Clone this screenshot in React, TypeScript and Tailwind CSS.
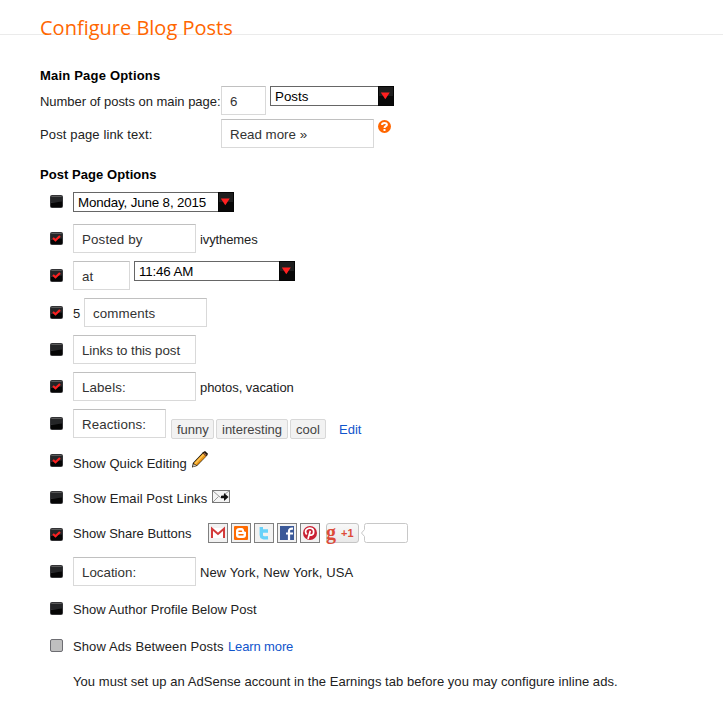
import React from "react";

type BoxProps = { children?: React.ReactNode; className?: string };

function Text({ children, className = "" }: BoxProps) {
  return <span className={`block h-5 shrink-0 whitespace-nowrap leading-5 ${className}`}>{children}</span>;
}

function Field({ children, className = "" }: BoxProps) {
  return (
    <div
      className={`h-[29px] shrink-0 whitespace-nowrap border border-[#d9d9d9] border-t-[#c0c0c0] bg-white pl-2 pt-[5px] text-[13.33px] leading-5 text-[#333] ${className}`}
    >
      {children}
    </div>
  );
}

function Select({ children, className = "" }: BoxProps) {
  return (
    <div className={`flex h-5 shrink-0 border border-r-0 border-[#666] bg-white text-black ${className}`}>
      <span className="grow whitespace-nowrap pl-1 text-[13.33px] leading-[19px]">{children}</span>
      <svg className="-my-px h-5 w-4 shrink-0" viewBox="0 0 16 20">
        <rect width="16" height="20" fill="#050505" />
        <rect x="1" y="1" width="14" height="9" fill="#1e1e1e" />
        <rect x="1" y="10" width="14" height="9" fill="#090909" />
        <path d="M2.800 6.500H11.800L7.300 13.300Z" fill="#ff2020" />
      </svg>
    </div>
  );
}

function Check({ on = false, off = false }: { on?: boolean; off?: boolean }) {
  return (
    <svg className="mt-3 h-[13px] w-[13px] shrink-0" viewBox="0 0 13 13">
      {off ? (
        <rect x=".5" y=".5" width="12" height="12" rx="1.500" fill="#bfbfbf" stroke="#6d6d72" />
      ) : (
        <>
          <rect width="13" height="13" rx="2" fill="#333336" />
          <rect x="1.500" y="1" width="10" height="1" fill="#5a5a5a" />
          <rect x="1" y="2" width="11" height="5" fill="#242527" />
          <path d="M1 8L12 6.500V12H1Z" fill="#050505" />
          {on && <path d="M3 6L5.500 8.300L10 4" fill="none" stroke="#fb2020" strokeWidth="2.200" />}
        </>
      )}
    </svg>
  );
}

function Row({ children, on, off }: { children?: React.ReactNode; on?: boolean; off?: boolean }) {
  return (
    <div className="flex h-[37px] items-start pl-[10px]">
      <Check on={on} off={off} />
      <div className="ml-[10px] flex items-start">{children}</div>
    </div>
  );
}

function Chip({ children, className = "" }: BoxProps) {
  return (
    <span
      className={`h-5 shrink-0 whitespace-nowrap rounded-[2px] border border-[#d8d8d8] bg-[#f2f2f2] pl-[5px] leading-[19px] text-[#444] ${className}`}
    >
      {children}
    </span>
  );
}

function HelpIcon() {
  return (
    <svg className="ml-1 mt-px h-[13px] w-[13px] shrink-0" viewBox="0 0 13 13">
      <circle cx="6.500" cy="6.500" r="6.500" fill="#f60" />
      <path d="M4.100 5V4.700C4.100 2.300 8.900 2.300 8.900 4.700C8.900 6.200 6.500 6.100 6.500 8" fill="none" stroke="#fff" strokeWidth="2" />
      <rect x="5.500" y="9" width="2" height="2" fill="#fff" />
    </svg>
  );
}

function Pencil() {
  return (
    <svg className="ml-1 mt-[9px] h-[17px] w-4 shrink-0" viewBox="0 0 16 17">
      <path d="M0 16.500L.8 12L11 1.200L13 0L16 2.800L15.200 4.500L5 15Z" fill="#1a1408" />
      <path d="M1.700 12.300L10.900 2.400L14 5.200L4.700 14.500Z" fill="#e8961a" />
      <path d="M2.300 12.100L11 2.900L12.300 4.100L3.700 13.300Z" fill="#ffc450" />
      <path d="M.9 15.700L1.600 12.900L4.300 14.800Z" fill="#d9cfc4" />
      <path d="M11.300 2.400L12.400 1.500L14.800 3.900L13.900 5Z" fill="#a0664a" />
    </svg>
  );
}

function Email() {
  return (
    <svg className="ml-1 mt-[11px] h-[13px] w-[18px] shrink-0" viewBox="0 0 18 13">
      <rect x=".5" y=".5" width="17" height="12" fill="#f4f4f4" stroke="#777" />
      <path d="M1 1L8.500 7.500L17 1M1 12L6.500 6.500" fill="none" stroke="#999" />
      <path d="M9 5.800H12V3L16.500 7L12 11V8.200H9Z" fill="#111" />
    </svg>
  );
}

function Share({ children }: BoxProps) {
  return (
    <svg className="h-5 w-5 shrink-0" viewBox="0 0 20 20">
      <rect x=".5" y=".5" width="19" height="19" fill="#f2f2f2" stroke="#808080" />
      {children}
    </svg>
  );
}

function ShareButtons() {
  return (
    <div className="mt-[7px] flex gap-[3px]">
      <Share>
        <rect x="3" y="5" width="14" height="10" fill="#fff" />
        <path d="M4 15V5.700L10 11L16 5.700V15" fill="none" stroke="#d33a3a" strokeWidth="2" />
      </Share>
      <Share>
        <rect x="3" y="3" width="14" height="14" rx="1" fill="#ff6a00" />
        <path d="M8.300 5H10.500C12.500 5 13 6.500 13.100 8.200L15 9V12C15 14 14 15 12 15H8C6 15 5 14 5 12V8C5 6 6.300 5 8.300 5Z" fill="#fff" />
        <path d="M8 8.200H10.500M8 11.800H12" stroke="#ff6a00" strokeWidth="1.500" strokeLinecap="round" />
      </Share>
      <Share>
        <path d="M7.300 4V12C7.300 14.500 9 15.200 14 14.800M7.500 8H14" fill="none" stroke="#69d2f9" strokeWidth="3.400" />
      </Share>
      <Share>
        <rect x="3" y="3" width="14" height="14" fill="#3b5998" />
        <path d="M12 17V8C12 6.200 13 5.500 16 5.700M9 10.500H16" fill="none" stroke="#fff" strokeWidth="2.200" />
      </Share>
      <Share>
        <circle cx="10" cy="10" r="7" fill="#c91f32" />
        <path d="M6.700 11.500C3.500 7 8 4.500 11 5.300C15 6.300 14 12 11.300 12.200C9.500 12.400 9.200 11 9.200 11M10.300 7.800L8 16" fill="none" stroke="#fff" strokeWidth="1.700" />
      </Share>
      <div className="ml-[3px] flex h-5 w-[33px] shrink-0 rounded-[3px] border border-[#c5c5c5] bg-linear-to-b from-[#f8f8f8] to-[#e9e9e9] text-[#dd4b39]">
        <span className="-ml-px w-[15px] font-['Liberation_Serif',serif] text-[20px] font-bold leading-[16px]">g</span>
        <span className="text-[11px] font-bold leading-[19px]">+1</span>
      </div>
      <svg className="-ml-px h-5 w-[47px] shrink-0" viewBox="0 0 47 20">
        <path d="M3.500 6.500V2.500Q3.500 .5 5.500 .5H44.500Q46.500 .5 46.500 2.500V17.500Q46.500 19.500 44.500 19.500H5.500Q3.500 19.500 3.500 17.500V13.500L.5 10Z" fill="#fff" stroke="#c8c8c8" />
      </svg>
    </div>
  );
}

export default function App() {
  return (
    <main className="h-[707px] w-[723px] overflow-hidden bg-white font-['Liberation_Sans',Arial,sans-serif] text-[13px] text-[#222]">
      <header className="h-[35px] border-b border-[#ebebeb] pl-10 pt-3">
        <h1 className="h-8 whitespace-nowrap font-['Open_Sans',sans-serif] text-[20px] leading-8 text-[#f60]">
          Configure Blog Posts
        </h1>
      </header>

      <section className="pl-10 pt-[31px]">
        <h2 className="h-5 font-bold leading-5 tracking-[0.2px] text-black">Main Page Options</h2>
        <div className="flex h-[33px] items-start">
          <Text className="mt-[6px] w-[181px] tracking-[-0.03px]">Number of posts on main page:</Text>
          <Field className="w-[45px]">6</Field>
          <Select className="ml-1 w-[124px]">Posts</Select>
        </div>
        <div className="flex h-[46px] items-start">
          <Text className="mt-[6px] w-[181px] tracking-[0.13px]">Post page link text:</Text>
          <Field className="w-[153px]">Read more »</Field>
          <HelpIcon />
        </div>
        <h2 className="h-[18px] font-bold leading-5 tracking-[0.06px] text-black">Post Page Options</h2>
      </section>

      <section className="pl-10">
        <Row>
          <Select className="mt-[9px] w-[161px] tracking-[-0.14px]">Monday, June 8, 2015</Select>
        </Row>
        <Row on>
          <Field className="mt-1 w-[123px] tracking-[0.15px]">Posted by</Field>
          <Text className="ml-1 mt-[10px] tracking-[-0.1px]">ivythemes</Text>
        </Row>
        <Row on>
          <Field className="mt-1 w-[57px] tracking-[0.2px]">at</Field>
          <Select className="ml-1 mt-1 w-[161px] tracking-[-0.15px]">11:46 AM</Select>
        </Row>
        <Row on>
          <Text className="mt-[10px] w-[11px]">5</Text>
          <Field className="mt-1 w-[123px] tracking-[0.1px]">comments</Field>
        </Row>
        <Row>
          <Field className="mt-1 w-[123px] tracking-[-0.07px]">Links to this post</Field>
        </Row>
        <Row on>
          <Field className="mt-1 w-[123px] tracking-[0.12px]">Labels:</Field>
          <Text className="ml-1 mt-[10px] tracking-[-0.06px]">photos, vacation</Text>
        </Row>
        <Row>
          <Field className="mt-1 w-[93px] tracking-[0.1px]">Reactions:</Field>
          <div className="ml-[5px] mt-[14px] flex gap-[2px]">
            <Chip className="w-[43px]">funny</Chip>
            <Chip className="w-[72px]">interesting</Chip>
            <Chip className="w-9">cool</Chip>
            <Text className="ml-[11px] mt-px text-[#15c]">Edit</Text>
          </div>
        </Row>
        <Row on>
          <Text className="mt-[12px] w-[115px] tracking-[0.06px]">Show Quick Editing</Text>
          <Pencil />
        </Row>
        <Row>
          <Text className="mt-[10px] w-[135px] tracking-[0.1px]">Show Email Post Links</Text>
          <Email />
        </Row>
        <Row on>
          <Text className="mt-[8px] w-[135px]">Show Share Buttons</Text>
          <ShareButtons />
        </Row>
        <Row>
          <Field className="mt-1 w-[123px]">Location:</Field>
          <Text className="ml-1 mt-[10px] tracking-[0.1px]">New York, New York, USA</Text>
        </Row>
        <Row>
          <Text className="mt-[10px] tracking-[0.03px]">Show Author Profile Below Post</Text>
        </Row>
        <Row off>
          <Text className="mt-[10px] w-[155px] tracking-[0.11px]">Show Ads Between Posts</Text>
          <Text className="mt-[10px] tracking-[-0.13px] text-[#15c]">Learn more</Text>
        </Row>
        <Text className="ml-[33px] mt-[8px] tracking-[0.05px]">
          You must set up an AdSense account in the Earnings tab before you may configure inline ads.
        </Text>
      </section>
    </main>
  );
}
